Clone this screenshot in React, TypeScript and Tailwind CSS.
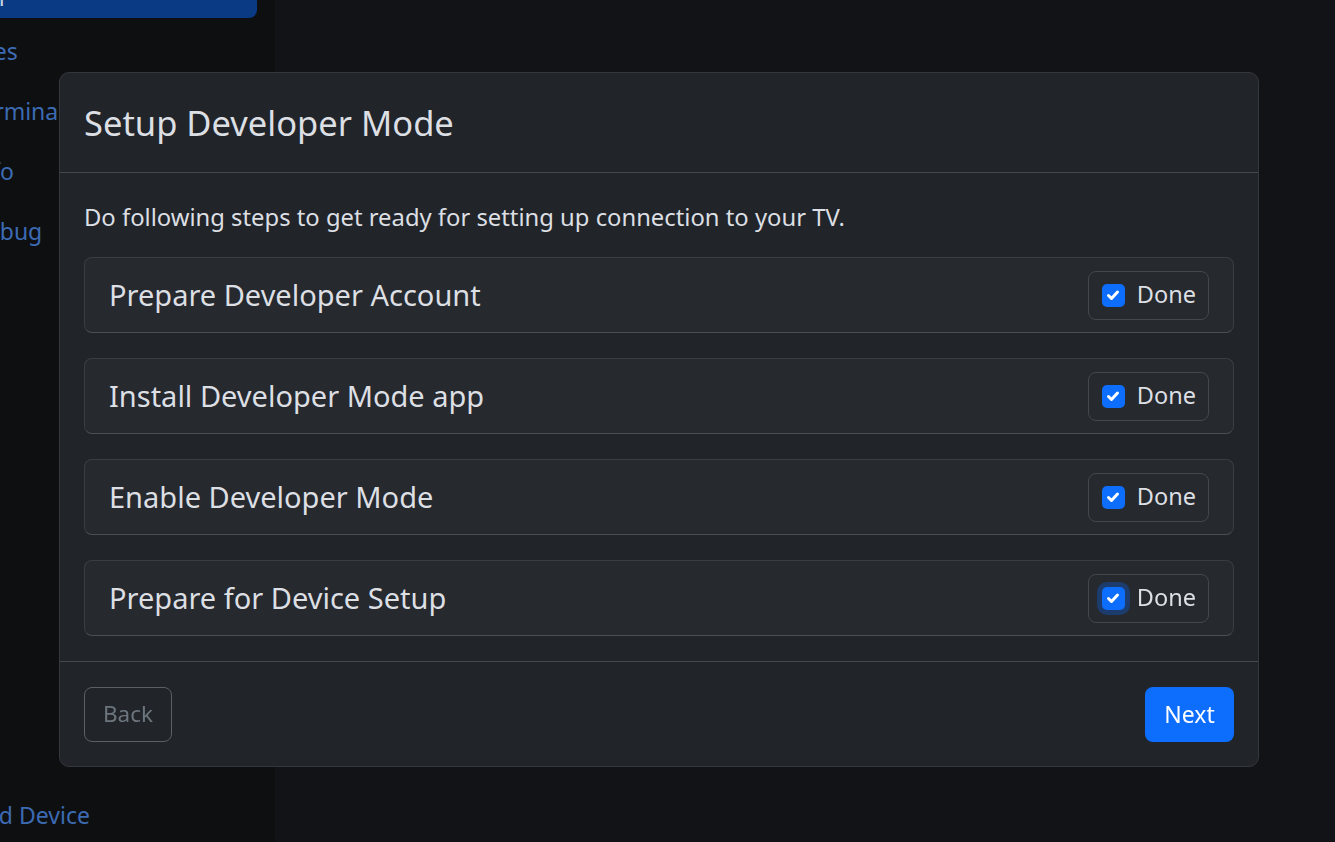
import React, { useState } from 'react';

const steps = [
  'Prepare Developer Account',
  'Install Developer Mode app',
  'Enable Developer Mode',
  'Prepare for Device Setup',
];

const navItems = ['Files', 'Terminal', 'Info', 'Debug'];

const CheckIcon: React.FC = () => (
  <svg viewBox="0 0 16 16" className="w-[16px] h-[16px]" fill="none">
    <path d="M3.5 8.5l3 3 6-6.5" stroke="#fff" strokeWidth="3" strokeLinecap="round" strokeLinejoin="round" />
  </svg>
);

const StepCard: React.FC<{ title: string; done: boolean; focused?: boolean; onToggle: () => void }> = ({
  title,
  done,
  focused,
  onToggle,
}) => (
  <div className="flex items-center justify-between h-[76px] pl-6 pr-6 bg-[#26292e] border border-[#3a3d42] border-b-[#4b4f54] rounded-lg">
    <span className="text-[29px] text-[#dcdfe3]">{title}</span>
    <label className="flex items-center gap-[12px] h-[49px] pl-[13px] pr-[12px] border border-[#44484d] rounded-lg cursor-pointer">
      <button
        type="button"
        onClick={onToggle}
        className={`flex items-center justify-center w-[23px] h-[23px] rounded-[5px] ${
          done ? 'bg-[#0d6efd]' : 'border border-[#6c757d]'
        } ${focused ? 'ring-[5px] ring-[#1c3c6e]' : ''}`}
      >
        {done && <CheckIcon />}
      </button>
      <span className="text-[23.5px] text-[#dcdfe3]">Done</span>
    </label>
  </div>
);

const App: React.FC = () => {
  const [done, setDone] = useState([true, true, true, true]);

  const toggle = (i: number) => setDone((d) => d.map((v, j) => (j === i ? !v : v)));

  return (
    <div className="h-[842px] w-[1335px] flex overflow-hidden bg-[#121316]" style={{ fontFamily: '"Noto Sans", "Open Sans", sans-serif' }}>
      {/* sidebar, scrolled partly out of view */}
      <aside className="w-[275px] h-full bg-[#0e0f11] overflow-hidden flex flex-col pr-[18px]">
        <nav className="flex flex-col gap-[6px] -ml-[46px] -mt-[36px]">
          <div className="h-[54px] flex items-center pl-4 bg-[#0a3a84] rounded-lg text-[23px] text-[#c9d3e3]">Apps</div>
          {navItems.map((item) => (
            <div key={item} className="h-[54px] flex items-center pl-4 text-[23px] text-[#3c6bb3]">
              {item}
            </div>
          ))}
        </nav>
        <div className="mt-auto -ml-[46px] h-[54px] flex items-center pl-4 text-[23px] text-[#3c6bb3]">Add Device</div>
      </aside>
      <main className="flex-1" />

      {/* modal */}
      <div className="fixed inset-0 pl-[59px] pt-[72px]">
        <div className="w-[1200px] h-[695px] flex flex-col bg-[#212529] border border-[#34373c] rounded-[10px]">
          <div className="h-[100px] shrink-0 flex items-center px-6 border-b border-[#45494e]">
            <h4 className="text-[34.5px] text-[#dcdfe3]">Setup Developer Mode</h4>
          </div>
          <div className="flex-1 flex flex-col px-6 pt-[26px]">
            <p className="text-[23.8px] text-[#dcdfe3] leading-[36px]">
              Do following steps to get ready for setting up connection to your TV.
            </p>
            <div className="flex flex-col gap-[25px] mt-[22px]">
              {steps.map((s, i) => (
                <StepCard key={s} title={s} done={done[i]} focused={i === 3} onToggle={() => toggle(i)} />
              ))}
            </div>
          </div>
          <div className="h-[105px] shrink-0 flex items-center justify-between px-6 border-t border-[#45494e]">
            <button type="button" disabled className="h-[55px] w-[88px] border border-[#5a6066] rounded-lg text-[22.5px] text-[#6c757d]">
              Back
            </button>
            <button type="button" className="h-[55px] w-[89px] bg-[#0d6efd] rounded-lg text-[23px] text-white">
              Next
            </button>
          </div>
        </div>
      </div>
    </div>
  );
};

export default App;
